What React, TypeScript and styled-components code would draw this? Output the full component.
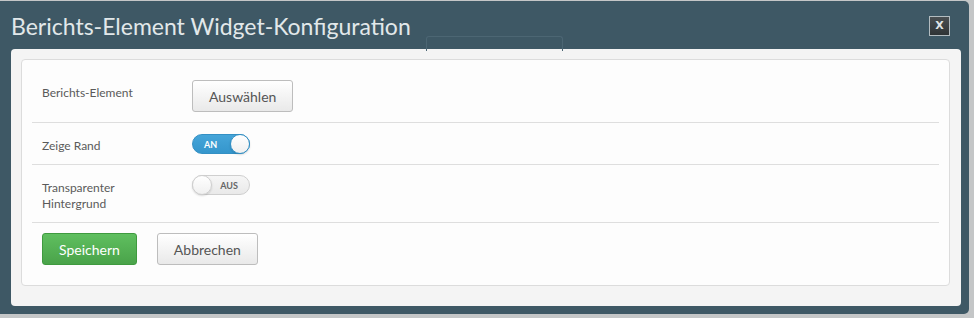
import styled, { createGlobalStyle } from "styled-components";

const GlobalStyle = createGlobalStyle`
  html, body {
    margin: 0;
    padding: 0;
    background: #c4c6c7;
  }
  body {
    font-family: Lato, "Liberation Sans", sans-serif;
  }
`;

const Modal = styled.div`
  position: relative;
  width: 969px;
  height: 313px;
  margin-top: 1px;
  background: #3e5865;
  border-radius: 0 5px 5px 0;
  box-sizing: border-box;
  padding: 0 8px 8px 11px;
  display: flex;
  flex-direction: column;
`;

const Header = styled.div`
  height: 48px;
  display: flex;
  align-items: center;
  justify-content: space-between;
  padding-right: 11px;
`;

const Title = styled.h1`
  margin: 0;
  padding-top: 2px;
  font-family: Lato, "Liberation Sans", sans-serif;
  font-weight: 400;
  font-size: 23px;
  color: #e2e8ea;
`;

// faint tab outline peeking out behind the body panel
const GhostTab = styled.div`
  position: absolute;
  left: 426px;
  top: 35px;
  width: 135px;
  height: 14px;
  border: 1px solid #4c6673;
  border-bottom: none;
  border-radius: 3px 3px 0 0;
`;

const CloseButton = styled.button`
  width: 21px;
  height: 20px;
  padding: 0;
  margin-top: 1px;
  border: 1px solid #b3bcc0;
  background: linear-gradient(#4a4f52, #2f3436);
  color: #dfe3e5;
  font-family: "DejaVu Sans", sans-serif;
  font-weight: 700;
  font-size: 11px;
  line-height: 18px;
  cursor: pointer;
`;

const Body = styled.div`
  flex: 1;
  background: #f4f4f4;
  border-radius: 4px;
  padding: 10px 11px 20px 10px;
`;

const Card = styled.div`
  background: #fdfdfd;
  border: 1px solid #dcdcdc;
  border-radius: 4px;
  padding: 0 10px;
  height: 100%;
  box-sizing: border-box;
`;

const Row = styled.div<{ $height: number }>`
  display: grid;
  grid-template-columns: 150px 1fr;
  align-items: center;
  height: ${(p) => p.$height}px;
  padding-left: 10px;
  border-bottom: 1px solid #dedede;
`;

const Label = styled.div`
  margin-top: 4px;
  font-size: 12px;
  line-height: 16px;
  color: #5a5a5a;
`;

const Control = styled.div<{ $top: number }>`
  align-self: start;
  margin-top: ${(p) => p.$top}px;
  display: flex;
`;

const Button = styled.button<{ $primary?: boolean }>`
  height: 32px;
  padding: 0 16px;
  border-radius: 3px;
  font-family: Lato, "Liberation Sans", sans-serif;
  font-size: 14px;
  cursor: pointer;
  border: 1px solid ${(p) => (p.$primary ? "#3f9a3f" : "#bdbdbd")};
  color: ${(p) => (p.$primary ? "#ffffff" : "#555555")};
  background: ${(p) =>
    p.$primary
      ? "linear-gradient(#5fbf5f, #4aa34a)"
      : "linear-gradient(#ffffff, #e9e9e9)"};
`;

const Actions = styled.div`
  display: flex;
  gap: 20px;
  padding: 10px 0 0 10px;
`;

const Switch = styled.div<{ $on: boolean }>`
  position: relative;
  width: 58px;
  height: 20px;
  box-sizing: border-box;
  border-radius: 10px;
  border: 1px solid ${(p) => (p.$on ? "#3490c4" : "#cfcfcf")};
  background: ${(p) =>
    p.$on ? "linear-gradient(#45a5d9, #3596cc)" : "linear-gradient(#f6f6f6, #e9e9e9)"};
  display: flex;
  align-items: center;
  justify-content: ${(p) => (p.$on ? "flex-start" : "flex-end")};
  padding: ${(p) => (p.$on ? "0 0 0 11px" : "0 11px 0 0")};
`;

const SwitchText = styled.span<{ $on: boolean }>`
  font-family: Lato, "Liberation Sans", sans-serif;
  font-size: 9px;
  font-weight: 700;
  color: ${(p) => (p.$on ? "#ffffff" : "#666666")};
`;

const Knob = styled.span<{ $on: boolean }>`
  position: absolute;
  top: -1px;
  ${(p) => (p.$on ? "right: -1px;" : "left: -1px;")}
  width: 20px;
  height: 20px;
  box-sizing: border-box;
  border-radius: 50%;
  background: linear-gradient(#ffffff, #f0f0f0);
  border: 1px solid ${(p) => (p.$on ? "#3490c4" : "#cfcfcf")};
  box-shadow: 0 1px 2px rgba(0, 0, 0, 0.15);
`;

const Toggle = ({ on }: { on: boolean }) => (
  <Switch $on={on}>
    <SwitchText $on={on}>{on ? "AN" : "AUS"}</SwitchText>
    <Knob $on={on} />
  </Switch>
);

const App = () => {
  return (
    <>
      <GlobalStyle />
      <Modal>
        <Header>
          <Title>Berichts-Element Widget-Konfiguration</Title>
          <CloseButton>X</CloseButton>
        </Header>
        <GhostTab />
        <Body>
          <Card>
            <Row $height={62}>
              <Label>Berichts-Element</Label>
              <Control $top={20}>
                <Button>Auswählen</Button>
              </Control>
            </Row>
            <Row $height={41}>
              <Label>Zeige Rand</Label>
              <Control $top={11}>
                <Toggle on />
              </Control>
            </Row>
            <Row $height={57}>
              <Label>
                Transparenter
                <br />
                Hintergrund
              </Label>
              <Control $top={10}>
                <Toggle on={false} />
              </Control>
            </Row>
            <Actions>
              <Button $primary>Speichern</Button>
              <Button>Abbrechen</Button>
            </Actions>
          </Card>
        </Body>
      </Modal>
    </>
  );
};

export default App;
